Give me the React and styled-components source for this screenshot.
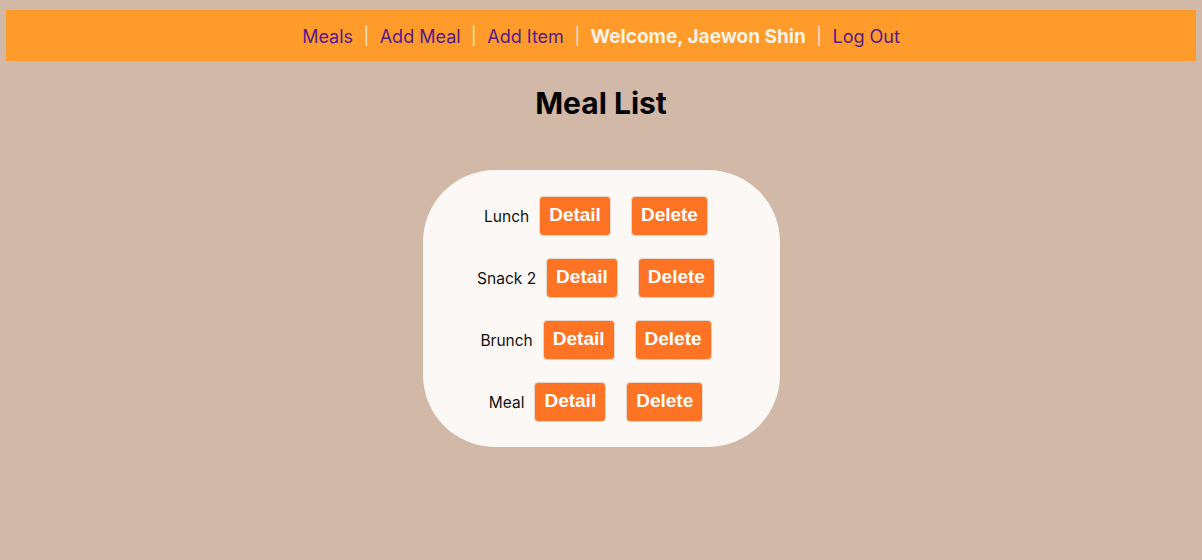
import React from "react";
import styled, { createGlobalStyle } from "styled-components";

const Global = createGlobalStyle`
  html, body { margin: 0; padding: 0; background: #d2b8a6; }
  body { font-family: Inter, "Noto Sans", sans-serif; }
`;

const Page = styled.div`
  padding: 10px 6px;
  min-height: 540px;
`;

const Nav = styled.nav`
  background: #ff9b2b;
  height: 51px;
  display: flex;
  align-items: center;
  justify-content: center;
  gap: 10.5px;
  font-family: Inter, sans-serif;
  font-size: 18px;
  padding-top: 1px;
  box-sizing: border-box;
`;

const NavLink = styled.a`
  color: #551a8b;
  text-decoration: none;
`;

const Sep = styled.span`
  color: #fbe9d6;
  font-size: 17px;
`;

const Welcome = styled.span`
  color: #fdf2e6;
  font-weight: 700;
  font-size: 19px;
`;

const Title = styled.h1`
  margin: 24px 0 0;
  text-align: center;
  font-family: Inter, sans-serif;
  font-size: 30px;
  font-weight: 700;
  line-height: 36px;
  color: #000;
`;

const Card = styled.div`
  width: 357px;
  margin: 49px auto 0;
  box-sizing: border-box;
  background: #fcf8f5;
  border-radius: 72px;
  padding: 26px 0 25px;
  display: flex;
  flex-direction: column;
  align-items: center;
  gap: 22px;
`;

const Row = styled.div`
  display: flex;
  align-items: center;
`;

const Label = styled.span`
  font-family: Inter, sans-serif;
  font-size: 15.5px;
  color: #111;
`;

const Button = styled.button`
  margin: 0 10px;
  height: 40px;
  padding: 0 9px 2px;
  background: #ff7324;
  color: #fff;
  border: 1px solid #e3d6cc;
  border-radius: 4px;
  font-family: "Liberation Sans", Arial, sans-serif;
  font-weight: 700;
  font-size: 19px;
  cursor: pointer;
`;

const meals = ["Lunch", "Snack 2", "Brunch", "Meal"];

export default function App() {
  return (
    <>
      <Global />
      <Page>
        <Nav>
          <NavLink href="#">Meals</NavLink>
          <Sep>|</Sep>
          <NavLink href="#">Add Meal</NavLink>
          <Sep>|</Sep>
          <NavLink href="#">Add Item</NavLink>
          <Sep>|</Sep>
          <Welcome>Welcome, Jaewon Shin</Welcome>
          <Sep>|</Sep>
          <NavLink href="#">Log Out</NavLink>
        </Nav>
        <Title>Meal List</Title>
        <Card>
          {meals.map((m) => (
            <Row key={m}>
              <Label>{m}</Label>
              <Button>Detail</Button>
              <Button>Delete</Button>
            </Row>
          ))}
        </Card>
      </Page>
    </>
  );
}
